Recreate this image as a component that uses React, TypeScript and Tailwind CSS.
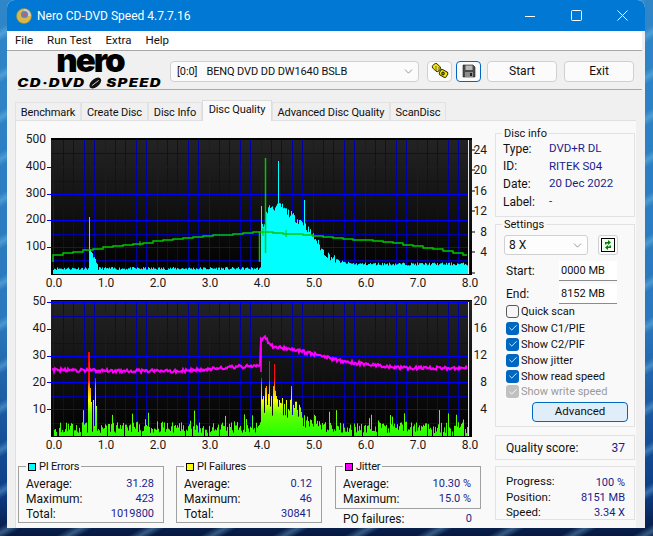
import React from "react";
import { Check, ChevronDown } from "lucide-react";

// small seeded generator so the chart noise stays the same between runs
function rng(seed: number) {
  let s = seed;
  return () => {
    s = (s * 16807) % 2147483647;
    return (s - 1) / 2147483646;
  };
}

function lerp(pts: number[][], x: number) {
  for (let i = 1; i < pts.length; i++) {
    if (x <= pts[i][0]) {
      const [x0, y0] = pts[i - 1];
      const [x1, y1] = pts[i];
      return y0 + ((y1 - y0) * (x - x0)) / (x1 - x0 || 1);
    }
  }
  return pts[pts.length - 1][1];
}

const X0 = 52;
const UNIT = 52;
const minorX = Array.from({ length: 41 }, (_, i) => X0 + i * 10.4);

function Grid({ top, bottom, majors, minors }: { top: number; bottom: number; majors: number[]; minors: number[] }) {
  return (
    <g shapeRendering="crispEdges">
      {minors.map((y) => (
        <line key={y} x1={50} x2={468} y1={y} y2={y} stroke="#0000a8" strokeWidth={1} />
      ))}
      {minorX.map((x, i) =>
        i % 5 === 0 ? null : <line key={x} x1={x} x2={x} y1={top} y2={bottom} stroke="#0000a8" strokeWidth={1} />
      )}
      {minorX.map((x, i) =>
        i % 5 === 0 ? <line key={x} x1={x} x2={x} y1={top} y2={bottom} stroke="#0000ff" strokeWidth={1} /> : null
      )}
      {majors.map((y) => (
        <line key={y} x1={46} x2={468} y1={y} y2={y} stroke="#0000ff" strokeWidth={1} />
      ))}
    </g>
  );
}

function XLabels({ y }: { y: number }) {
  return (
    <g fill="#1a1a1a" fontSize={12} textAnchor="middle">
      {[0, 1, 2, 3, 4, 5, 6, 7, 8].map((v) => (
        <text key={v} x={X0 + v * UNIT + 1} y={y}>
          {v.toFixed(1)}
        </text>
      ))}
    </g>
  );
}

const cyanEnv = [
  [260, 46], [263, 52], [266, 64], [270, 68], [275, 66], [280, 68], [285, 63], [290, 59], [295, 55], [300, 53],
  [305, 47], [310, 40], [315, 34], [320, 25], [325, 20], [330, 17], [335, 14], [340, 12], [345, 11], [355, 10], [468, 10],
];

function TopChart() {
  const r = rng(11);
  const bars: React.ReactNode[] = [];
  for (let x = 52; x < 468; x++) {
    let h: number;
    if (x < 260) {
      h = 4 + r() * 3;
      if (x >= 89 && x < 97) h = 22 - (x - 89) * 2 + r() * 3;
      if (x === 88) h = 57;
    } else {
      h = lerp(cyanEnv, x) + (r() - 0.5) * (x < 335 ? 8 : 3);
      if (x === 260) h = 68;
      if (x === 277) h = 113;
      if (x === 303) h = 74;
    }
    bars.push(<rect key={x} x={x} y={274 - h} width={1} height={h} fill="#00ffff" />);
  }
  const speedPts: number[][] = [
    [52, 255], [88, 249], [157, 240.7], [208, 235.7], [258, 231.7], [300, 235], [335, 238], [390, 243], [430, 249], [466, 255.7],
  ];
  let d = "M52 262 L52 255";
  for (let x = 52; x < 466; x += 10) {
    const y = Math.round(lerp(speedPts, x));
    d += ` L${x} ${y} L${Math.min(x + 10, 466)} ${y}`;
  }
  return (
    <svg width={479} height={165} viewBox="15 130 479 165" className="block shrink-0" style={{ fontFamily: "Roboto, sans-serif" }}>
      <defs>
        <linearGradient id="plotA" x1="0" y1="0" x2="0" y2="1">
          <stop offset="0" stopColor="#242424" />
          <stop offset="1" stopColor="#000000" />
        </linearGradient>
      </defs>
      <rect x={50} y={138} width={421} height={137} fill="url(#plotA)" />
      <rect x={50} y={138} width={421} height={2} fill="#000" />
      <Grid top={140} bottom={274} majors={[167, 194, 220, 247]} minors={[153, 181, 207, 234, 260]} />
      {bars}
      <path d={d} fill="none" stroke="#00c800" strokeWidth={1.4} />
      <line x1={258.5} x2={258.5} y1={232} y2={262} stroke="#00c800" strokeWidth={1.5} />
      <line x1={264.5} x2={264.5} y1={158} y2={253} stroke="#00c800" strokeWidth={1.5} />
      <line x1={262} x2={262} y1={228} y2={236} stroke="#00c800" />
      <line x1={285} x2={285} y1={230} y2={237} stroke="#00c800" />
      <line x1={139} x2={139} y1={241} y2={246} stroke="#00c800" />
      <line x1={467.5} x2={467.5} y1={140} y2={274} stroke="#e8e8e8" strokeWidth={1} />
      <rect x={50} y={274} width={421} height={1} fill="#000" />
      <g fill="#1a1a1a" fontSize={12} textAnchor="end">
        {[[500, 143], [400, 170], [300, 197], [200, 223], [100, 250]].map(([v, y]) => (
          <text key={v} x={45} y={y}>
            {v}
          </text>
        ))}
      </g>
      <g fill="#1a1a1a" fontSize={12}>
        {[[24, 150], [20, 170], [16, 191], [12, 211], [8, 232], [4, 252]].map(([v, y]) => (
          <g key={v}>
            <line x1={471} x2={474} y1={y} y2={y} stroke="#000" />
            <text x={486} y={y + 4} textAnchor="end">
              {v}
            </text>
          </g>
        ))}
        <line x1={471} x2={474} y1={273} y2={273} stroke="#000" />
      </g>
      <XLabels y={287} />
    </svg>
  );
}

const pifSpikes: Record<number, number> = {
  87: 84, 88: 84, 89: 48, 90: 34, 92: 36, 94: 58, 95: 30, 260: 58, 262: 40, 265: 50, 267: 42, 268: 75, 270: 40,
  272: 50, 273: 72, 275: 40, 278: 36, 281: 38, 283: 32, 285: 36, 290: 50, 293: 28, 296: 26, 300: 24,
};

function BottomChart() {
  const r = rng(29);
  const bars: React.ReactNode[] = [];
  for (let x = 52; x < 468; x++) {
    let h = r() < 0.07 ? 0 : 3 + r() * 11;
    if (r() < 0.08) h = 14 + r() * 12;
    if (x >= 260 && x < 300) h = 18 + r() * (34 - (x - 260) * 0.4);
    if (x >= 300 && x < 320) h = 8 + r() * 14;
    if (pifSpikes[x]) h = pifSpikes[x];
    if (h > 0) bars.push(<rect key={x} x={x} y={436 - h} width={1} height={h} fill="url(#pifFill)" />);
  }
  const jitterPts: number[][] = [
    [52, 370], [120, 371], [180, 371], [230, 367], [259, 366], [260, 339], [264, 337], [270, 346], [290, 349], [312, 354],
    [340, 361], [370, 365], [400, 368], [468, 368],
  ];
  const rj = rng(53);
  let d = "M52 370";
  for (let x = 52; x <= 466; x += 1) {
    const y = lerp(jitterPts, x) + (rj() - 0.5) * 3.5;
    d += ` L${x} ${y.toFixed(1)}`;
  }
  return (
    <svg width={479} height={165} viewBox="15 295 479 165" className="block shrink-0" style={{ fontFamily: "Roboto, sans-serif" }}>
      <defs>
        <linearGradient id="plotB" x1="0" y1="0" x2="0" y2="1">
          <stop offset="0" stopColor="#242424" />
          <stop offset="1" stopColor="#000000" />
        </linearGradient>
        <linearGradient id="pifFill" gradientUnits="userSpaceOnUse" x1="0" y1="436" x2="0" y2="346">
          <stop offset="0" stopColor="#22ff00" />
          <stop offset="0.25" stopColor="#66ff00" />
          <stop offset="0.4" stopColor="#ffff00" />
          <stop offset="0.55" stopColor="#ff9000" />
          <stop offset="0.62" stopColor="#ff1010" />
          <stop offset="1" stopColor="#ff0000" />
        </linearGradient>
      </defs>
      <rect x={50} y={300} width={421} height={137} fill="url(#plotB)" />
      <rect x={50} y={300} width={421} height={1} fill="#000" />
      <Grid top={302} bottom={436} majors={[302, 329, 356, 382, 409]} minors={[316, 343, 369, 396, 423]} />
      {bars}
      <path d={d} fill="none" stroke="#ff00ff" strokeWidth={2} />
      <line x1={88.5} x2={88.5} y1={362} y2={372} stroke="#ff00ff" />
      <line x1={260} x2={260} y1={345} y2={372} stroke="#ff00ff" strokeWidth={1.5} />
      <line x1={467.5} x2={467.5} y1={302} y2={436} stroke="#e8e8e8" strokeWidth={1} />
      <rect x={50} y={436} width={421} height={1} fill="#000" />
      <g fill="#1a1a1a" fontSize={12} textAnchor="end">
        {[[50, 305], [40, 332], [30, 359], [20, 386], [10, 413]].map(([v, y]) => (
          <text key={v} x={45} y={y}>
            {v}
          </text>
        ))}
      </g>
      <g fill="#1a1a1a" fontSize={12} textAnchor="end">
        {[[20, 305], [16, 332], [12, 359], [8, 386], [4, 413]].map(([v, y]) => (
          <text key={v} x={486} y={y}>
            {v}
          </text>
        ))}
      </g>
      <XLabels y={449} />
    </svg>
  );
}

function Row({ label, value, cls = "h-[15px]" }: { label: string; value: string; cls?: string }) {
  return (
    <div className={`flex items-center justify-between ${cls}`}>
      <span>{label}</span>
      <span className="text-[11px] text-[#1c1c8c]">{value}</span>
    </div>
  );
}

function StatBox({ title, color, rows, height }: { title: string; color: string; rows: string[][]; height: string }) {
  return (
    <div className={`relative w-[146px] border border-[#a0a0a0] pl-[7px] pr-[9px] pt-[9px] ${height}`}>
      <div className="absolute -top-[8px] left-[7px] flex items-center gap-[3px] bg-[#f9f9f9] px-[2px] text-[11px] leading-[15px] tracking-[-0.2px]">
        <span className={`h-[8px] w-[8px] border border-black ${color}`} />
        <span>{title}</span>
      </div>
      {rows.map(([l, v]) => (
        <Row key={l} label={l} value={v} />
      ))}
    </div>
  );
}

function ShowCheck({ label, checked = true, disabled = false, h }: { label: string; checked?: boolean; disabled?: boolean; h: string }) {
  return (
    <div className={`flex items-center gap-[2px] pl-[2px] text-[11px] ${h} ${disabled ? "text-[#9a9a9a]" : ""}`}>
      <span
        className={`flex h-[13px] w-[13px] items-center justify-center rounded-[3px] ${
          disabled ? "bg-[#c0c0c0]" : checked ? "bg-[#0067c0]" : "border border-[#5a5a5a] bg-[#f6f6f6]"
        }`}
      >
        {checked && <Check size={10} strokeWidth={2} color="#fff" />}
      </span>
      <span>{label}</span>
    </div>
  );
}

function ToolButton({ children, cls }: { children: React.ReactNode; cls: string }) {
  return (
    <div className={`flex h-[21px] items-center justify-center rounded-[4px] border bg-[#fbfbfb] ${cls}`}>{children}</div>
  );
}

const tabs = [
  ["Benchmark", "w-[66px]"],
  ["Create Disc", "w-[67px]"],
  ["Disc Info", "w-[54px]"],
  ["Disc Quality", "w-[70px]"],
  ["Advanced Disc Quality", "w-[118px]"],
  ["ScanDisc", "w-[56px]"],
];

export default function App() {
  return (
    <div
      className="flex h-[536px] w-[653px] flex-col overflow-hidden bg-[repeating-linear-gradient(150deg,rgba(140,210,245,0)_0px,rgba(140,210,245,0)_24px,rgba(140,210,245,0.35)_30px,rgba(140,210,245,0)_36px),linear-gradient(180deg,#2f86c8_0%,#2a78bd_60%,#0d3d86_92%,#07183f_100%)] pl-[7px] pr-[8px] pb-[8px] text-[12px] leading-none text-[#111]"
      style={{ fontFamily: "Roboto, 'Liberation Sans', sans-serif" }}
    >
      <div className="flex h-[528px] flex-col overflow-hidden rounded-t-[8px] bg-[#f0f0f0]">
        {/* title bar */}
        <div className="flex h-[31px] shrink-0 items-center bg-[#0078d4] pl-[9px] text-white">
          <svg width={16} height={16} viewBox="0 0 16 16" className="mr-[5px]">
            <circle cx={8} cy={8} r={7.5} fill="#d8b84a" />
            <circle cx={8} cy={8} r={7.5} fill="none" stroke="#a58a2c" strokeWidth={0.6} />
            <path d="M8 1 A7 7 0 0 1 15 8 L8 8 Z" fill="#c9d0e0" />
            <circle cx={8.5} cy={6.5} r={3.6} fill="#6d7fb4" />
            <circle cx={8.5} cy={6.5} r={1.6} fill="#e0584a" />
          </svg>
          <span>Nero CD-DVD Speed 4.7.7.16</span>
          <div className="ml-auto flex h-full items-center">
            <div className="flex w-[46px] justify-center">
              <svg width={10} height={10} viewBox="0 0 10 10" shapeRendering="crispEdges">
                <line x1={0} x2={10} y1={5} y2={5} stroke="#fff" />
              </svg>
            </div>
            <div className="flex w-[46px] justify-center">
              <svg width={11} height={11} viewBox="0 0 11 11">
                <rect x={0.5} y={0.5} width={10} height={10} rx={1} fill="none" stroke="#fff" />
              </svg>
            </div>
            <div className="flex w-[46px] justify-center">
              <svg width={11} height={11} viewBox="0 0 11 11">
                <path d="M0.5 0.5 L10.5 10.5 M10.5 0.5 L0.5 10.5" stroke="#fff" strokeWidth={1} />
              </svg>
            </div>
          </div>
        </div>
        {/* menu */}
        <div className="mr-[3px] flex h-[20px] shrink-0 items-center gap-[14px] border-b border-[#a8a8a8] bg-white pl-[8px] text-[11.5px]">
          <span>File</span>
          <span>Run Test</span>
          <span>Extra</span>
          <span>Help</span>
        </div>
        {/* toolbar */}
        <div className="ml-[11px] mr-[3px] flex h-[39px] shrink-0 items-center border-b border-[#a8a8a8] pt-[2px]">
          <div className="mb-[2px] mr-[8px] flex w-[144px] flex-col items-center">
            <span
              className="h-[22px] text-[33px] font-black leading-[18px] tracking-[-2px] text-black"
              style={{ fontFamily: "Inter, sans-serif" }}
            >
              nero
            </span>
            <span
              className="mt-[4px] flex scale-x-[1.3] items-center whitespace-nowrap text-[11.5px] font-black italic leading-[11px] tracking-[1px] text-black"
              style={{ fontFamily: "Inter, sans-serif" }}
            >
              CD·DVD
              <svg width={14} height={12} viewBox="0 0 16 12" className="mx-[1px]">
                <ellipse cx={8} cy={6} rx={4} ry={7} transform="rotate(35 8 6)" fill="#111" />
                <path d="M5 9 L11 3" stroke="#fff" strokeWidth={0.8} />
              </svg>
              SPEED
            </span>
          </div>
          <div className="flex h-[21px] w-[249px] items-center justify-between rounded-[4px] border border-[#d0d0d0] bg-[#fbfbfb] pl-[6px] pr-[3px] text-[11px]">
            <span className="flex gap-[9px] tracking-[-0.1px]">
              <span>[0:0]</span>
              <span>BENQ DVD DD DW1640 BSLB</span>
            </span>
            <ChevronDown size={13} strokeWidth={1} color="#444" />
          </div>
          <ToolButton cls="ml-[8px] w-[25px] border-[#d0d0d0]">
            <svg width={18} height={16} viewBox="0 0 18 16">
              <g stroke="#1a1a00" strokeWidth={0.9} fill="#f5e400">
                <rect x={1.5} y={1.5} width={8} height={6} rx={2} transform="rotate(45 5.5 4.5)" />
                <rect x={8.5} y={7.5} width={8} height={6} rx={2} transform="rotate(30 12.5 10.5)" />
                <path d="M5 3 V8 M8 4 V9" stroke="#555" />
                <circle cx={12} cy={10.5} r={1.4} fill="#8a8a00" />
              </g>
            </svg>
          </ToolButton>
          <ToolButton cls="ml-[4px] w-[25px] border-[#0067c0]">
            <svg width={14} height={14} viewBox="0 0 14 14">
              <path d="M1 1 H11 L13 3 V13 H1 Z" fill="#4a4a4a" stroke="#222" strokeWidth={0.6} />
              <rect x={3.5} y={1.5} width={7} height={4.5} fill="#b8b8b8" />
              <rect x={3} y={8} width={8} height={5} fill="#8c8c8c" />
              <rect x={8} y={9} width={2} height={3} fill="#222" />
            </svg>
          </ToolButton>
          <ToolButton cls="ml-[6px] w-[70px] border-[#d0d0d0]">Start</ToolButton>
          <ToolButton cls="ml-[7px] w-[70px] border-[#d0d0d0]">Exit</ToolButton>
        </div>
        {/* tabs */}
        <div className="ml-[8px] mt-[10px] flex h-[20px] shrink-0 items-end text-[11px] tracking-[-0.1px]">
          {tabs.map(([t, w]) =>
            t === "Disc Quality" ? (
              <div
                key={t}
                className={`flex h-[21px] ${w} relative z-10 -mb-[1px] items-center justify-center whitespace-nowrap border border-b-0 border-[#dcdcdc] bg-[#f9f9f9] pb-[3px]`}
              >
                {t}
              </div>
            ) : (
              <div key={t} className={`flex h-[18px] ${w} items-center justify-center whitespace-nowrap border border-b-0 border-[#e2e2e2] pt-[1px]`}>
                {t}
              </div>
            )
          )}
        </div>
        {/* tab body */}
        <div className="ml-[8px] mr-[9px] flex min-h-0 flex-1 border-l border-t border-[#e0e0e0] bg-[#f9f9f9]">
          <div className="flex w-[479px] flex-col pt-[9px]">
            <TopChart />
            <BottomChart />
            <div className="ml-[2px] mt-[6px] flex items-start gap-[12px]">
              <StatBox
                title="PI Errors"
                color="bg-[#00ffff]"
                height="h-[57px]"
                rows={[["Average:", "31.28"], ["Maximum:", "423"], ["Total:", "1019800"]]}
              />
              <StatBox
                title="PI Failures"
                color="bg-[#ffff00]"
                height="h-[57px]"
                rows={[["Average:", "0.12"], ["Maximum:", "46"], ["Total:", "30841"]]}
              />
              <div className="ml-[1px] flex flex-col">
                <StatBox
                  title="Jitter"
                  color="bg-[#ff00ff]"
                  height="h-[43px]"
                  rows={[["Average:", "10.30 %"], ["Maximum:", "15.0 %"]]}
                />
                <div className="pl-[8px] pr-[9px] pt-[2px]">
                  <Row label="PO failures:" value="0" />
                </div>
              </div>
            </div>
          </div>
          <div className="flex w-[140px] flex-col pt-[12px]">
            {/* disc info */}
            <div className="relative h-[84px] border border-[#e2e2e2] pl-[7px] pt-[6px]">
              <span className="absolute -top-[7px] left-[6px] bg-[#f9f9f9] px-[2px] text-[11px] leading-[14px]">Disc info</span>
              {[["Type:", "DVD+R DL"], ["ID:", "RITEK S04"], ["Date:", "20 Dec 2022"], ["Label:", "-"]].map(([l, v]) => (
                <div key={l} className="flex h-[17.6px] items-center">
                  <span className="w-[46px]">{l}</span>
                  <span className="text-[11.5px] text-[#1c1c8c]">{v}</span>
                </div>
              ))}
            </div>
            {/* settings */}
            <div className="relative mt-[7px] h-[203px] border border-[#e2e2e2] pl-[8px] pt-[10px]">
              <span className="absolute -top-[7px] left-[6px] bg-[#f9f9f9] px-[2px] text-[11px] leading-[14px]">Settings</span>
              <div className="flex items-center">
                <div className="flex h-[20px] w-[84px] items-center justify-between rounded-[3px] border border-[#d0d0d0] bg-[#fdfdfd] pl-[4px] pr-[3px]">
                  <span>8 X</span>
                  <ChevronDown size={13} strokeWidth={1} color="#444" />
                </div>
                <div className="ml-[10px] flex h-[20px] w-[20px] items-center justify-center rounded-[3px] border border-[#d0d0d0] bg-[#fbfbfb]">
                  <svg width={14} height={14} viewBox="0 0 14 14">
                    <rect x={0.5} y={0.5} width={13} height={13} fill="#f4fff4" stroke="#000" />
                    <path d="M4 6.5 V4 H7 V2 L10 4.5 L7 7 V5.5 H5.5 V6.5 Z" fill="#008000" />
                    <path d="M10 7.5 V10 H7 V12 L4 9.5 L7 7 V8.5 H8.5 V7.5 Z" fill="#008000" />
                  </svg>
                </div>
              </div>
              <div className="mt-[6px] flex h-[20px] items-center">
                <span className="w-[55px] pl-[2px]">Start:</span>
                <div className="flex h-[20px] w-[58px] items-center border-b border-[#8c8c8c] bg-white pl-[2px] text-[11px]">0000 MB</div>
              </div>
              <div className="mt-[3px] flex h-[20px] items-center">
                <span className="w-[55px] pl-[2px]">End:</span>
                <div className="flex h-[20px] w-[58px] items-center border-b border-[#8c8c8c] bg-white pl-[2px] text-[11px]">8152 MB</div>
              </div>
              <div className="-mt-[1px]">
                <ShowCheck label="Quick scan" checked={false} h="h-[16px]" />
                <div className="h-[1px]" />
                <ShowCheck label="Show C1/PIE" h="h-[16px]" />
                <ShowCheck label="Show C2/PIF" h="h-[16px]" />
                <ShowCheck label="Show jitter" h="h-[16px]" />
                <ShowCheck label="Show read speed" h="h-[16px]" />
                <ShowCheck label="Show write speed" disabled h="h-[15px]" />
              </div>
              <div className="ml-[28px] mt-[3px] flex h-[20px] w-[96px] items-center justify-center rounded-[4px] border border-[#0067c0] bg-[#e0eefa] text-[11.5px]">
                Advanced
              </div>
            </div>
            {/* quality */}
            <div className="mt-[8px] flex h-[25px] items-center justify-between border border-[#e2e2e2] pl-[10px] pr-[9px]">
              <span>Quality score:</span>
              <span className="text-[#1c1c8c]">37</span>
            </div>
            {/* progress */}
            <div className="mt-[6px] h-[54px] border border-[#e2e2e2] pl-[10px] pr-[9px] pt-[7px] text-[11.5px]">
              <Row label="Progress:" value="100 %" cls="h-[16px]" />
              <Row label="Position:" value="8151 MB" cls="h-[15px]" />
              <Row label="Speed:" value="3.34 X" cls="h-[15px]" />
            </div>
          </div>
        </div>
      </div>
    </div>
  );
}
